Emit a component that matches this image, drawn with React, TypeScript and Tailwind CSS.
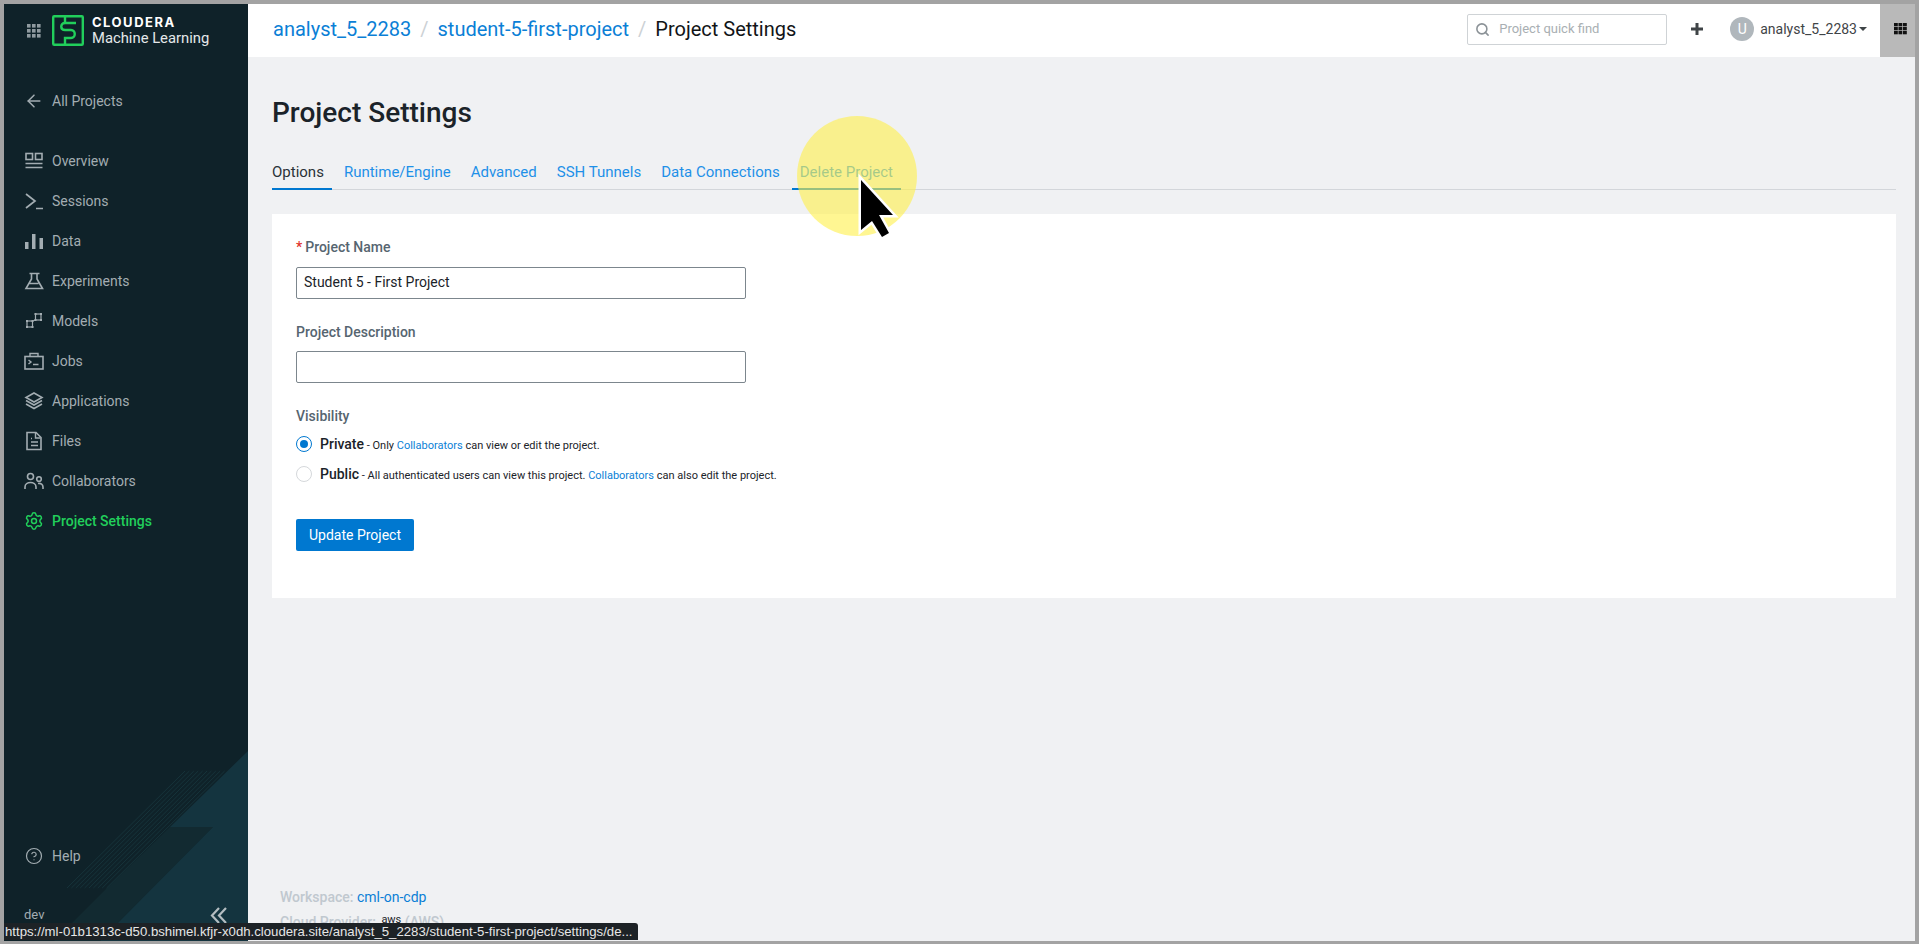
import { ArrowLeft, CircleHelp, Search, Settings } from "lucide-react";
import type { ReactNode } from "react";

const roboto = "font-['Roboto',sans-serif]";

function Svg({ children }: { children: ReactNode }) {
  return (
    <svg width="20" height="20" viewBox="0 0 20 20" fill="none" stroke="currentColor" strokeWidth="1.6">
      {children}
    </svg>
  );
}

// Esquinas de los nodos del icono Models
const esquinas = [
  [2, 9],
  [7.5, 9],
  [2, 15],
  [7.5, 15],
  [10.5, 2],
  [16, 2],
  [10.5, 8],
  [16, 8],
];

const iconos: Record<string, ReactNode> = {
  Overview: (
    <Svg>
      <rect x="2" y="2.5" width="6.5" height="6" />
      <rect x="11.5" y="2.5" width="6.5" height="6" />
      <path d="M1.5 12.500h17M1.500 16.500h17" strokeWidth="1.700" />
    </Svg>
  ),
  Sessions: (
    <Svg>
      <path d="M2 3l9 7-9 7M12 17.500h7" strokeWidth="1.700" />
    </Svg>
  ),
  Data: (
    <Svg>
      <path d="M1 11h3.500v7H1zM8 3h3.500v15H8zM15.500 7H19v11h-3.500z" fill="currentColor" stroke="none" />
    </Svg>
  ),
  Experiments: (
    <Svg>
      <path d="M5.500 2.500h10M7.500 2.500v5.500L2 17.500h16.500L13 8V2.500M5.500 12.500h9" />
    </Svg>
  ),
  Models: (
    <Svg>
      <rect x="3" y="10" width="5.500" height="6" strokeWidth="1.200" />
      <rect x="11.500" y="3" width="5.500" height="6" strokeWidth="1.200" />
      <path d="M8.500 10l3-1" strokeWidth="1.200" />
      {esquinas.map(([x, y]) => (
        <rect key={`${x}-${y}`} x={x} y={y} width="2" height="2" fill="currentColor" stroke="none" />
      ))}
    </Svg>
  ),
  Jobs: (
    <Svg>
      <rect x="1" y="5.500" width="18" height="12.500" />
      <path d="M6 5.500V2.500h8v3M4.500 9l2.500 2-2.500 2M9 13.500h5.500" strokeWidth="1.400" />
    </Svg>
  ),
  Applications: (
    <Svg>
      <path d="M10 2l8 4.500-8 4.500-8-4.500z" />
      <path d="M2 9.500l8 4.500 8-4.500M2 13l8 4.500 8-4.500" />
    </Svg>
  ),
  Files: (
    <Svg>
      <path d="M3 1.500h9l5 5v12H3z" />
      <path d="M11.500 2v5h5M7 7.500h1M7 11h7M7 14.500h7" strokeWidth="1.400" />
    </Svg>
  ),
  Collaborators: (
    <Svg>
      <circle cx="6.500" cy="5.500" r="3" />
      <circle cx="15" cy="8" r="2.300" />
      <path d="M1 18v-2c0-6 11-6 11 0v2M14 12.500c3-.5 5 1 5 3.500v2" />
    </Svg>
  ),
};

const items = ["Overview", "Sessions", "Data", "Experiments", "Models", "Jobs", "Applications", "Files", "Collaborators"];

function Fila({ icono, label, activo }: { icono: ReactNode; label: string; activo?: boolean }) {
  return (
    <div className={`flex h-10 items-center gap-2 pl-5 text-[14px] ${activo ? "font-medium text-[#21cf5b]" : "text-[#a3adb2]"}`}>
      <span className={`flex w-5 justify-center ${activo ? "text-[#21cf5b]" : "text-[#a3adb2]"}`}>{icono}</span>
      {label}
    </div>
  );
}

function Puntos({ color, size = 14 }: { color: string; size?: number }) {
  return (
    <svg width={size} height={size} viewBox="0 0 14 14" fill={color}>
      {[0, 5, 10].flatMap((y) =>
        [0, 5, 10].map((x) => <rect key={`${x}-${y}`} x={x} y={y} width="3.600" height="3.600" />),
      )}
    </svg>
  );
}

function Sidebar() {
  return (
    <aside className="relative flex w-[244px] shrink-0 flex-col overflow-hidden bg-[#0f2229]">
      <svg className="absolute left-0 top-0" width="244" height="937" viewBox="4 4 244 937">
        <path d="M170 827L107 888 54 941H100L213 827z" fill="#122a31" />
        <path d="M248 751V941H100L213 827H170z" fill="#14343f" />
        <g stroke="#16333a" strokeWidth="1">
          {[0, 1, 2, 3, 4, 5, 6, 7, 8, 9].map((i) => (
            <line key={i} x1={67 + i * 4.400} y1="888" x2={185 + i * 4.400} y2="771" />
          ))}
        </g>
      </svg>
      <div className="relative flex h-[53px] items-center pl-[23px]">
        <Puntos color="#8f9a9f" />
        <svg className="ml-[11px]" width="32" height="31" viewBox="0 0 32 31" fill="none" stroke="#21cf5b" strokeWidth="2.400">
          <rect x="1.200" y="1.200" width="29.600" height="28.600" rx="1" />
          <path d="M24 8H13c-5 0-5 7 0 7h6c5 0 5 8 0 8h-6v7" />
          <path d="M13 8V1" />
        </svg>
        <div className="ml-2 flex flex-col text-white">
          <span className="font-['Inter',sans-serif] text-[13px] font-bold leading-[16px] tracking-[1.500px]">CLOUDERA</span>
          <span className="text-[14.800px] leading-[17px] text-[#e4e8ea]">Machine Learning</span>
        </div>
      </div>
      <div className="relative mt-6">
        <Fila icono={<ArrowLeft size={20} strokeWidth={1.800} />} label="All Projects" />
      </div>
      <nav className="relative mt-5">
        {items.map((n) => (
          <Fila key={n} icono={iconos[n]} label={n} />
        ))}
        <Fila icono={<Settings size={20} strokeWidth={1.800} />} label="Project Settings" activo />
      </nav>
      <div className="relative mt-auto">
        <Fila icono={<CircleHelp size={18} strokeWidth={1.600} />} label="Help" />
        <div className="mb-[6px] mt-[19px] flex h-10 items-center justify-between pl-5 pr-5 text-[13px] text-[#a3adb2]">
          dev
          <svg width="18" height="17" viewBox="0 0 18 17" fill="none" stroke="#b4bdc1" strokeWidth="2.200">
            <path d="M9 1L2 8.500 9 16M16 1L9 8.500 16 16" />
          </svg>
        </div>
      </div>
    </aside>
  );
}

function Header() {
  return (
    <header className="flex h-[53px] shrink-0 items-center bg-white pl-[25px]">
      <div className="flex items-center pb-1 text-[20px] text-[#0b7fd6]">
        <span>analyst_5_2283</span>
        <span className="px-[9px] text-[#ccd1d5]">/</span>
        <span>student-5-first-project</span>
        <span className="px-[9px] text-[#ccd1d5]">/</span>
        <span className="text-[#111417]">Project Settings</span>
      </div>
      <div className="ml-auto flex h-full items-center">
        <div className="flex items-center pb-[3px]">
          <div className="flex h-[31px] w-[200px] items-center rounded-[2px] border border-[#cfd3d6] pl-[7px] text-[13px] text-[#a9afb3]">
            <Search size={15} strokeWidth={2.500} className="text-[#8b9297]" />
            <span className="ml-[9px]">Project quick find</span>
          </div>
          <svg className="ml-6" width="12" height="12" viewBox="0 0 12 12" fill="#3f4447">
            <path d="M4.500 0h3v4.500H12v3H7.500V12h-3V7.500H0v-3h4.500z" />
          </svg>
          <div className="ml-[27px] flex h-6 w-6 items-center justify-center rounded-full bg-[#b0b7bc] text-[14px] text-white">U</div>
          <span className="ml-[6px] text-[14px] text-[#3f4447]">analyst_5_2283</span>
          <span className="ml-[2px] h-0 w-0 border-x-[4px] border-t-[4px] border-x-transparent border-t-[#3f4447]" />
        </div>
        <div className="ml-[13px] flex h-full w-[35px] items-center justify-center bg-[#b9b9b9] pb-[3px] pl-[5px]">
          <svg width="13" height="12" viewBox="0 0 13 12" fill="#111">
            {[0, 4, 8].flatMap((y) => [0, 4.500, 9].map((x) => <rect key={`${x}-${y}`} x={x} y={y} width="3.800" height="3.300" />))}
          </svg>
        </div>
      </div>
    </header>
  );
}

const tabs = ["Runtime/Engine", "Advanced", "SSH Tunnels", "Data Connections"];

function Tabs() {
  return (
    <div className="mt-[23px] flex h-[36px] gap-1 border-b border-[#d3d6da] text-[15px]">
      <span className="-mb-px border-b-2 border-[#0078d0] pb-0 pr-2 pt-[7px] text-[#2a3238]">Options</span>
      {tabs.map((t) => (
        <span key={t} className="px-2 pt-[7px] text-[#1e90e8]">
          {t}
        </span>
      ))}
      <span className="-mb-px border-b-2 border-[#0078d0] px-2 pt-[7px] text-[#1e90e8]">Delete Project</span>
    </div>
  );
}

function Radio({ on }: { on?: boolean }) {
  return (
    <span className={`flex h-4 w-4 shrink-0 items-center justify-center rounded-full border bg-white ${on ? "border-[#0078d0]" : "border-[#d5d8db]"}`}>
      {on && <span className="h-2 w-2 rounded-full bg-[#0078d0]" />}
    </span>
  );
}

function Formulario() {
  const etiqueta = "text-[14px] font-medium leading-[20px] text-[#566570]";
  const input = "flex h-[32px] w-[450px] items-center rounded-[2px] border border-[#7c868d] bg-white px-[7px] pb-px text-[14px] text-[#1b2329]";
  const link = "text-[#0b7fd6]";
  return (
    <section className="mt-[24px] h-[384px] w-[1624px] bg-white pl-6 pt-[23px]">
      <div className={etiqueta}>
        <span className="mr-[3px] text-[#e0322b]">*</span>Project Name
      </div>
      <div className={`${input} mt-[10px]`}>Student 5 - First Project</div>
      <div className={`${etiqueta} mt-[23px]`}>Project Description</div>
      <div className={`${input} mt-[9px]`} />
      <div className={`${etiqueta} mt-[23px]`}>Visibility</div>
      <div className="mt-[8px] flex h-5 items-center gap-2 text-[11px] text-[#1b2329]">
        <Radio on />
        <span>
          <b className="text-[14px] font-medium">Private</b> - Only <span className={link}>Collaborators</span> can view or edit the project.
        </span>
      </div>
      <div className="mt-[10px] flex h-5 items-center gap-2 text-[11px] text-[#1b2329]">
        <Radio />
        <span>
          <b className="text-[14px] font-medium">Public</b> - All authenticated users can view this project. <span className={link}>Collaborators</span> can also edit the project.
        </span>
      </div>
      <button className="mt-[35px] h-8 w-[118px] rounded-[2px] bg-[#0078d0] text-[14px] text-white">Update Project</button>
    </section>
  );
}

export default function App() {
  return (
    <div className={`${roboto} relative flex h-[944px] w-[1919px] overflow-hidden bg-[#a3a3a3] pb-[3px] pl-1 pr-1 pt-1`}>
      <Sidebar />
      <main className="flex min-w-0 flex-1 flex-col bg-[#f0f1f3]">
        <Header />
        <div className="flex flex-1 flex-col pl-6 pr-[19px] pt-[38px]">
          <h1 className="text-[28px] font-medium leading-[36px] text-[#1b2329]">Project Settings</h1>
          <Tabs />
          <Formulario />
          <div className="mt-auto pb-[5px] pl-2 text-[14px] font-medium leading-[25px] text-[#c0c8cf]">
            <div>
              Workspace: <span className="font-normal text-[#0b7fd6]">cml-on-cdp</span>
            </div>
            <div>
              Cloud Provider: <span className="relative -top-1 ml-[2px] text-[11px] font-normal text-[#1b2329]">aws</span> (AWS)
            </div>
          </div>
        </div>
      </main>

      {/* URL de estado del navegador */}
      <div className="absolute bottom-[4px] left-1 flex h-[17px] w-[634px] items-center rounded-tr-[3px] bg-[#1d2226] pl-[1px] font-['Liberation_Sans',sans-serif] text-[13.200px] text-[#e6e6e6]">
        https://ml-01b1313c-d50.bshimel.kfjr-x0dh.cloudera.site/analyst_5_2283/student-5-first-project/settings/de...
      </div>

      {/* Resaltado del cursor */}
      <div className="absolute left-[797px] top-[116px] h-[120px] w-[120px] rounded-full bg-[#fff04a]/60" />
      <svg className="absolute left-[850px] top-[170px]" width="60" height="76" viewBox="850 170 60 76">
        <path
          d="M861 180V230L872 221 882 237 889 233 879 215H893z"
          fill="#000"
          stroke="#fff"
          strokeWidth="5"
          strokeLinejoin="miter"
          paintOrder="stroke"
        />
      </svg>
    </div>
  );
}
